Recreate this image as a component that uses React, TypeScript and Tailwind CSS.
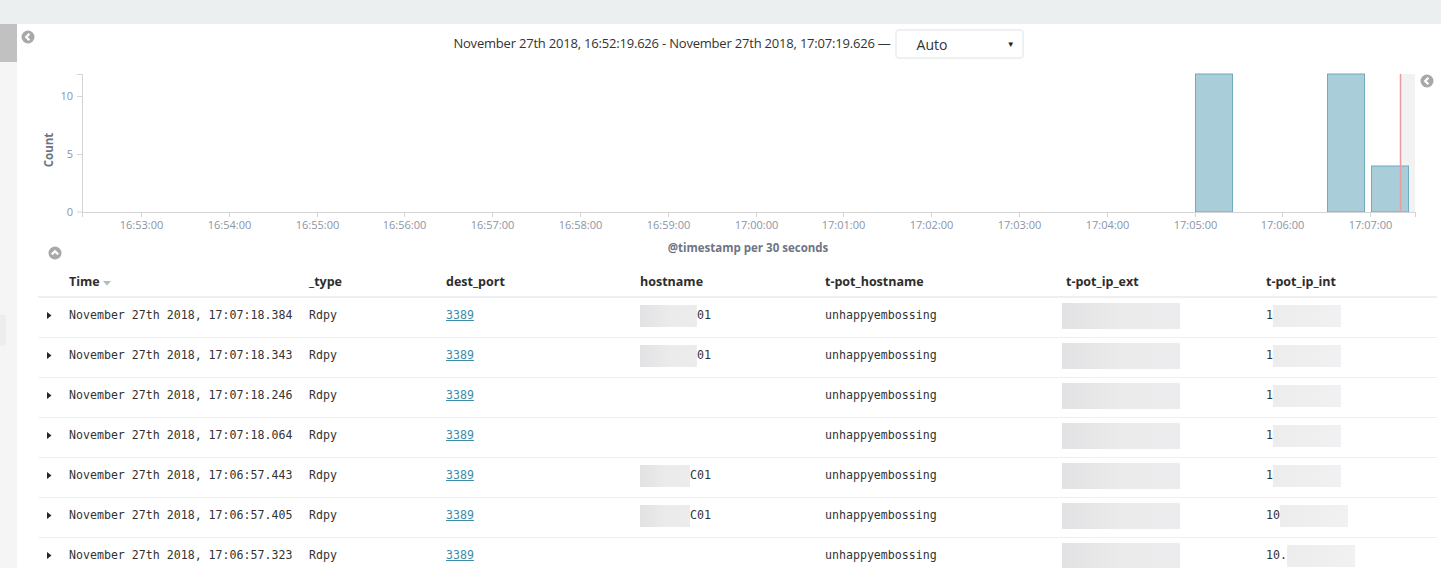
import React from "react";

const ticks = [
  "16:53:00", "16:54:00", "16:55:00", "16:56:00", "16:57:00", "16:58:00", "16:59:00", "17:00:00",
  "17:01:00", "17:02:00", "17:03:00", "17:04:00", "17:05:00", "17:06:00", "17:07:00",
];

type Row = { time: string; host: "d01" | "c01" | "none"; ipInt: string };

const rows: Row[] = [
  { time: "November 27th 2018, 17:07:18.384", host: "d01", ipInt: "1" },
  { time: "November 27th 2018, 17:07:18.343", host: "d01", ipInt: "1" },
  { time: "November 27th 2018, 17:07:18.246", host: "none", ipInt: "1" },
  { time: "November 27th 2018, 17:07:18.064", host: "none", ipInt: "1" },
  { time: "November 27th 2018, 17:06:57.443", host: "c01", ipInt: "1" },
  { time: "November 27th 2018, 17:06:57.405", host: "c01", ipInt: "10" },
  { time: "November 27th 2018, 17:06:57.323", host: "none", ipInt: "10." },
];

const Chevron = ({ dir }: { dir: "left" | "up" }) => (
  <svg width="14" height="14" viewBox="0 0 14 14">
    <circle cx="7" cy="7" r="6.5" fill="#a8a8a8" />
    {dir === "left" ? (
      <path d="M8.4 3.8 L5.2 7 L8.4 10.2" stroke="#fff" strokeWidth="2.2" fill="none" />
    ) : (
      <path d="M3.8 8.4 L7 5.2 L10.2 8.4" stroke="#fff" strokeWidth="2.2" fill="none" />
    )}
  </svg>
);

const Histogram = () => {
  const x0 = 65;
  const yTop = 10;
  const yZero = 148;
  const fontFam = "'Open Sans', sans-serif";
  return (
    <svg width="1424" height="198" className="block">
      {/* out-of-range zone */}
      <rect x="1383" y={yTop} width="15" height={yZero - yTop} fill="#f2f2f2" />
      {/* bars */}
      <rect x="1178.5" y={yTop} width="37" height={yZero - yTop} fill="#a9ced9" stroke="#6faabd" />
      <rect x="1310.5" y={yTop} width="37" height={yZero - yTop} fill="#a9ced9" stroke="#6faabd" />
      <rect x="1354.5" y="102" width="37" height={yZero - 102} fill="#a9ced9" stroke="#6faabd" />
      <line x1="1383.5" y1={yTop} x2="1383.5" y2={yZero} stroke="#eb9a9f" strokeWidth="1.5" />
      {/* y axis */}
      <path d={`M${x0 - 5} ${yTop + 0.5} H${x0 + 0.5} V${yZero}`} stroke="#d4d4d4" fill="none" />
      {[
        { v: "10", y: 32 },
        { v: "5", y: 90 },
        { v: "0", y: 147.5 },
      ].map((t) => (
        <g key={t.v}>
          <line x1={x0 - 5} x2={x0} y1={t.y + 0.5} y2={t.y + 0.5} stroke="#d4d4d4" />
          <text x={x0 - 9} y={t.y + 4} textAnchor="end" fontSize="11" fill="#8a94a6" fontFamily={fontFam}>
            {t.v}
          </text>
        </g>
      ))}
      <text
        x="0"
        y="0"
        transform="translate(36 86) rotate(-90)"
        textAnchor="middle"
        fontSize="11.5"
        fontWeight="700"
        fill="#6d7584"
        fontFamily={fontFam}
      >
        Count
      </text>
      {/* x axis */}
      <line x1={x0} x2="1398" y1={yZero + 0.5} y2={yZero + 0.5} stroke="#d4d4d4" />
      <line x1={x0 + 0.5} x2={x0 + 0.5} y1={yZero} y2={yZero + 5} stroke="#d4d4d4" />
      <line x1="1398.5" x2="1398.5" y1={yZero} y2={yZero + 5} stroke="#d4d4d4" />
      {ticks.map((t, i) => {
        const x = Math.round(124 + i * 87.8) + 0.5;
        return (
          <g key={t}>
            <line x1={x} x2={x} y1={yZero} y2={yZero + 5} stroke="#d4d4d4" />
            <text x={x} y={yZero + 17} textAnchor="middle" fontSize="11" fill="#8a94a6" fontFamily={fontFam}>
              {t}
            </text>
          </g>
        );
      })}
      <text x="731" y="188" textAnchor="middle" fontSize="11.5" fontWeight="700" fill="#6d7584" fontFamily={fontFam}>
        @timestamp per 30 seconds
      </text>
    </svg>
  );
};

const Redact = ({ w, className = "" }: { w: string; className?: string }) => (
  <span
    className={`inline-block h-[22px] align-middle bg-gradient-to-r from-[#e2e2e4] via-[#ebebeb] to-[#ececee] ${w} ${className}`}
  />
);

const cols = "grid grid-cols-[31px_240px_137px_194px_185px_241px_200px_171px]";

export default function App() {
  return (
    <div className="w-[1441px] h-[568px] overflow-hidden flex flex-col bg-white font-['Open_Sans',sans-serif] text-[#333]">
      <div className="h-[24px] shrink-0 bg-[#ebeff0]" />
      <div className="flex flex-1 min-h-0">
        <div className="w-[17px] shrink-0 bg-[#f5f5f5] flex flex-col">
          <div className="h-[38px] bg-[#c1c1c1]" />
          <div className="mt-[253px] h-[31px] w-[6px] rounded-r-[3px] bg-[#ededed]" />
        </div>
        <div className="relative flex-1 min-w-0">
          <div className="absolute left-[4px] top-[6px]">
            <Chevron dir="left" />
          </div>
          <div className="absolute left-[1403px] top-[50px]">
            <Chevron dir="left" />
          </div>
          <div className="absolute left-[31px] top-[222px]">
            <Chevron dir="up" />
          </div>

          <div className="h-[40px] pt-[5px] pl-[17px] flex justify-center items-start">
            <div className="flex items-center h-[30px] translate-x-[1px]">
              <span className="text-[13px] tracking-[-0.2px] mr-[4px]">
                November 27th 2018, 16:52:19.626 - November 27th 2018, 17:07:19.626 —
              </span>
              <div className="w-[129px] h-[30px] border-2 border-[#eef1f3] rounded-[4px] flex items-center justify-between pl-[20px] pr-[7px]">
                <span className="text-[14px] text-[#333] mt-[1px]">Auto</span>
                <span className="text-[8px] text-[#222]">▼</span>
              </div>
            </div>
          </div>

          <Histogram />

          <div className="ml-[21px] w-[1399px]">
            <div className={`${cols} h-[36px] items-center pt-[6px] border-b-2 border-[#ecf0f1] text-[12.5px] font-bold text-[#2d2d2d]`}>
              <div />
              <div className="flex items-center gap-[3px]">
                Time
                <svg width="8" height="5" viewBox="0 0 8 5" className="mt-[2px]">
                  <path d="M0 0 H8 L4 4.5 Z" fill="#b4b8c0" />
                </svg>
              </div>
              <div>_type</div>
              <div>dest_port</div>
              <div>hostname</div>
              <div>t-pot_hostname</div>
              <div>t-pot_ip_ext</div>
              <div>t-pot_ip_int</div>
            </div>
            {rows.map((r, i) => (
              <div
                key={i}
                className={`${cols} h-[40px] items-center pb-[4px] border-b border-[#ecf0f1] text-[11.6px] text-[#333] font-['DejaVu_Sans_Mono',monospace]`}
              >
                <div className="pl-[9px] flex items-center">
                  <svg width="5" height="7" viewBox="0 0 5 7">
                    <path d="M0 0 L4.5 3.5 L0 7 Z" fill="#1f2a38" />
                  </svg>
                </div>
                <div>{r.time}</div>
                <div>Rdpy</div>
                <div>
                  <span className="underline text-[#3b8cab]">3389</span>
                </div>
                <div className="flex items-center">
                  {r.host === "d01" && (
                    <>
                      <Redact w="w-[57px]" />
                      <span>01</span>
                    </>
                  )}
                  {r.host === "c01" && (
                    <>
                      <Redact w="w-[50px]" />
                      <span>C01</span>
                    </>
                  )}
                </div>
                <div>unhappyembossing</div>
                <div className="flex items-center">
                  <Redact w="w-[118px]" className="-ml-[4px] h-[26px]" />
                </div>
                <div className="flex items-center">
                  <span>{r.ipInt}</span>
                  <Redact w="w-[68px]" className="from-[#ededed] via-[#efefef] to-[#f1f1f3]" />
                </div>
              </div>
            ))}
          </div>
        </div>
      </div>
    </div>
  );
}
